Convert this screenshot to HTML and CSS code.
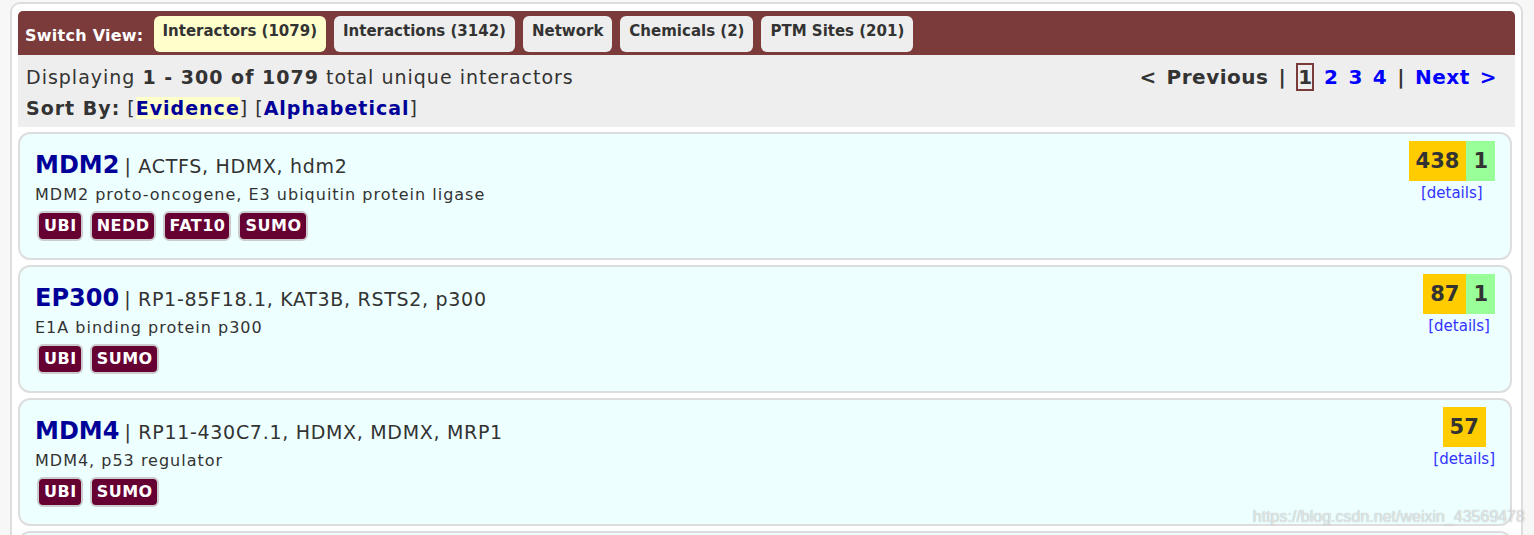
FILE: index.html
```html
<!DOCTYPE html>
<html>
<head>
<meta charset="utf-8">
<title>Interactors</title>
<link rel="stylesheet" href="styles.css">
</head>
<body>
<div class="container">
  <div class="switch">
    <span class="switch-label">Switch View:</span>
    <a class="view-btn active">Interactors (1079)</a>
    <a class="view-btn">Interactions (3142)</a>
    <a class="view-btn">Network</a>
    <a class="view-btn">Chemicals (2)</a>
    <a class="view-btn">PTM Sites (201)</a>
  </div>
  <div class="info">
    <div class="info-row">
      <div class="displaying">Displaying <b>1 - 300 of 1079</b> total unique interactors</div>
      <div class="pager">&lt; Previous | <span class="current">1</span> <a class="pg">2</a> <a class="pg">3</a> <a class="pg">4</a> | <a class="pg">Next &gt;</a></div>
    </div>
    <div class="sort"><b>Sort By:</b> [<a class="sort-link selected">Evidence</a>] [<a class="sort-link">Alphabetical</a>]</div>
  </div>

  <div class="card">
    <div class="card-main">
      <div class="name-line"><span class="gene">MDM2</span> <span class="aliases">| ACTFS, HDMX, hdm2</span></div>
      <div class="desc">MDM2 proto-oncogene, E3 ubiquitin protein ligase</div>
      <div class="badges"><span class="badge">UBI</span><span class="badge">NEDD</span><span class="badge">FAT10</span><span class="badge">SUMO</span></div>
    </div>
    <div class="card-side">
      <div class="scores"><span class="score low">438</span><span class="score high">1</span></div>
      <a class="details">[details]</a>
    </div>
  </div>

  <div class="card">
    <div class="card-main">
      <div class="name-line"><span class="gene">EP300</span> <span class="aliases">| RP1-85F18.1, KAT3B, RSTS2, p300</span></div>
      <div class="desc">E1A binding protein p300</div>
      <div class="badges"><span class="badge">UBI</span><span class="badge">SUMO</span></div>
    </div>
    <div class="card-side">
      <div class="scores"><span class="score low">87</span><span class="score high">1</span></div>
      <a class="details">[details]</a>
    </div>
  </div>

  <div class="card">
    <div class="card-main">
      <div class="name-line"><span class="gene">MDM4</span> <span class="aliases">| RP11-430C7.1, HDMX, MDMX, MRP1</span></div>
      <div class="desc">MDM4, p53 regulator</div>
      <div class="badges"><span class="badge">UBI</span><span class="badge">SUMO</span></div>
    </div>
    <div class="card-side">
      <div class="scores"><span class="score low">57</span></div>
      <a class="details">[details]</a>
    </div>
  </div>

  <div class="card"></div>
</div>
<div class="watermark">https://blog.csdn.net/weixin_43569478</div>
</body>
</html>
```

FILE: styles.css
```css
* { box-sizing: border-box; }
html, body { height: 100%; }
body {
  margin: 0;
  background: #f7f7f7;
  font-family: "DejaVu Sans", Verdana, sans-serif;
  color: #333;
  overflow: hidden;
}
a { text-decoration: none; cursor: pointer; }

.container {
  margin: 2px 11px 0 10px;
  border: 2px solid #ddd;
  border-bottom: none;
  border-radius: 10px 10px 0 0;
  background: #fff;
  padding: 7px 6px 0 6px;
  min-height: 600px;
}

.switch {
  background: #7b3b3b;
  border-radius: 5px 5px 0 0;
  height: 44px;
  display: flex;
  align-items: flex-start;
  padding: 5px 0 0 7px;
}
.switch-label {
  color: #fff;
  font-weight: bold;
  font-size: 16px;
  letter-spacing: 0.25px;
  line-height: 20px;
  margin-top: 10px;
  margin-right: 10px;
}
.view-btn {
  background: #eee;
  color: #333;
  font-weight: bold;
  font-size: 15px;
  line-height: 17px;
  padding: 7px 9px 12px;
  border-radius: 6px;
  margin-right: 8px;
}
.view-btn.active { background: #ffffcc; }

.info {
  background: #eee;
  padding: 7px 18px 3px 8px;
  font-size: 19px;
  letter-spacing: 1px;
  line-height: 31px;
}
.info-row {
  display: flex;
  justify-content: space-between;
  align-items: baseline;
}
.pager {
  font-weight: bold;
  font-size: 20px;
  letter-spacing: 0.5px;
  word-spacing: 2.5px;
}
.pager .current {
  border: 2px solid #7b3b3b;
  padding: 0;
  letter-spacing: 0;
}
.pager .pg { color: #0000ff; }
.sort-link {
  color: #000099;
  font-weight: bold;
}
.sort-link.selected { background: #ffffcc; }

.card {
  margin: 5px 3px 0 0;
  height: 128px;
  border: 2px solid #ddd;
  border-radius: 12px;
  background: #eeffff;
  padding: 7px 15px 0 15px;
  display: flex;
  justify-content: space-between;
  align-items: flex-start;
}
.name-line {
  margin-top: 9px;
  line-height: 30px;
}
.gene {
  font-size: 24px;
  font-weight: bold;
  color: #000099;
}
.aliases {
  font-size: 19px;
  letter-spacing: 0.7px;
}
.desc {
  font-size: 16px;
  letter-spacing: 1px;
  line-height: 24px;
}
.badges {
  display: flex;
  gap: 7px;
  margin-top: 4px;
  padding-left: 2px;
}
.badge {
  background: #660033;
  color: #fff;
  font-weight: bold;
  font-size: 16px;
  letter-spacing: 0.5px;
  line-height: 26px;
  height: 30px;
  padding: 0 4px 0 5px;
  border: 2px solid #ccc;
  border-radius: 6px;
}

.card-side {
  display: flex;
  flex-direction: column;
  align-items: center;
}
.scores { display: flex; }
.score {
  font-size: 21px;
  font-weight: bold;
  line-height: 40px;
  height: 40px;
  padding: 0 7px;
  color: #333;
}
.score.low { background: #ffcc00; }
.score.high { background: #99ff99; }
.details {
  color: #3333ff;
  font-size: 15px;
  line-height: 20px;
  margin-top: 2px;
}

.watermark {
  position: absolute;
  right: 9px;
  bottom: 9px;
  font-family: "Liberation Sans", Arial, sans-serif;
  font-size: 16px;
  color: rgba(255, 255, 255, 0.7);
  text-shadow: 0 0 1px rgba(0, 0, 0, 0.4);
}
```
